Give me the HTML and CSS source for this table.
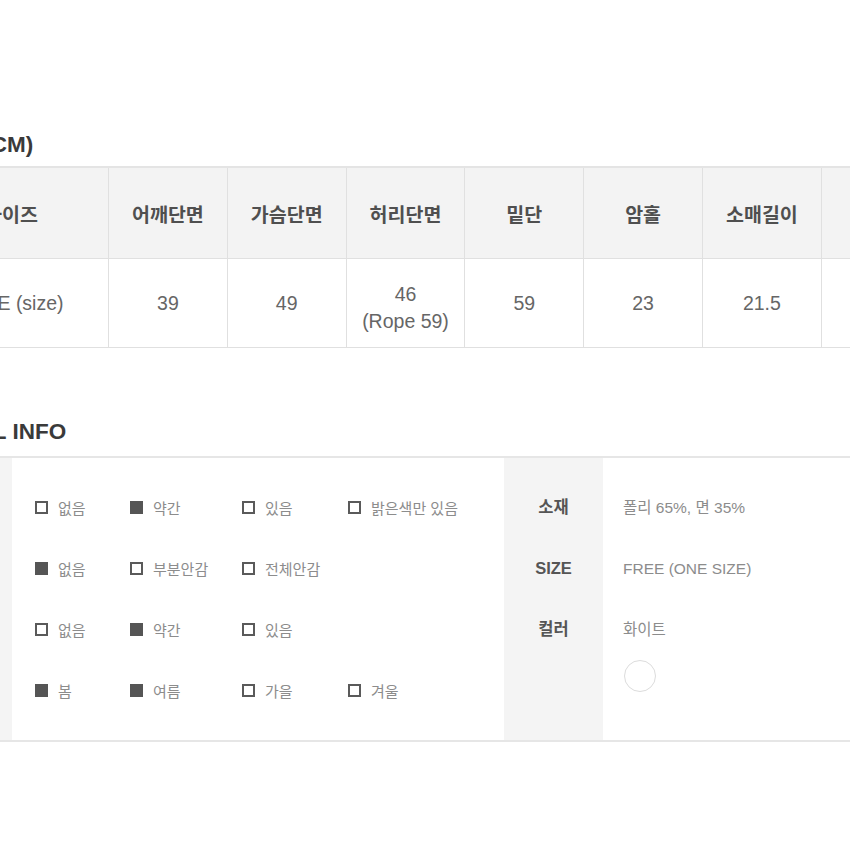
FILE: index.html
```html
<!DOCTYPE html>
<html lang="ko">
<head>
<meta charset="utf-8">
<title>SIZE / DETAIL INFO</title>
<link rel="stylesheet" href="styles.css">
</head>
<body>
<div class="page">
  <h2 class="sec-title">SIZE (CM)</h2>
  <table class="size-table">
    <colgroup>
      <col class="c-first">
      <col class="c"><col class="c"><col class="c"><col class="c">
      <col class="c"><col class="c"><col class="c"><col class="c">
    </colgroup>
    <thead>
      <tr>
        <th>사이즈</th>
        <th>어깨단면</th>
        <th>가슴단면</th>
        <th>허리단면</th>
        <th>밑단</th>
        <th>암홀</th>
        <th>소매길이</th>
        <th>총장</th>
        <th></th>
      </tr>
    </thead>
    <tbody>
      <tr>
        <td>FREE (size)</td>
        <td>39</td>
        <td>49</td>
        <td class="two-line">46<br>(Rope 59)</td>
        <td>59</td>
        <td>23</td>
        <td>21.5</td>
        <td>55</td>
        <td></td>
      </tr>
    </tbody>
  </table>

  <h2 class="sec-title sec-title-2">DETAIL INFO</h2>
  <div class="detail">
    <div class="label-col">
      <div class="label">비침</div>
      <div class="label">안감</div>
      <div class="label">신축성</div>
      <div class="label">계절</div>
    </div>
    <div class="options">
      <div class="opt"><span class="box"></span>없음</div>
      <div class="opt"><span class="box on"></span>약간</div>
      <div class="opt"><span class="box"></span>있음</div>
      <div class="opt"><span class="box"></span>밝은색만 있음</div>

      <div class="opt"><span class="box on"></span>없음</div>
      <div class="opt"><span class="box"></span>부분안감</div>
      <div class="opt"><span class="box"></span>전체안감</div>
      <div class="opt"></div>

      <div class="opt"><span class="box"></span>없음</div>
      <div class="opt"><span class="box on"></span>약간</div>
      <div class="opt"><span class="box"></span>있음</div>
      <div class="opt"></div>

      <div class="opt"><span class="box on"></span>봄</div>
      <div class="opt"><span class="box on"></span>여름</div>
      <div class="opt"><span class="box"></span>가을</div>
      <div class="opt"><span class="box"></span>겨울</div>
    </div>
    <div class="label-col">
      <div class="label">소재</div>
      <div class="label">SIZE</div>
      <div class="label">컬러</div>
    </div>
    <div class="values">
      <div class="value">폴리 65%, 면 35%</div>
      <div class="value">FREE (ONE SIZE)</div>
      <div class="value">화이트</div>
      <div class="swatch"></div>
    </div>
  </div>
</div>
</body>
</html>
```

FILE: styles.css
```css
html, body {
  margin: 0;
  padding: 0;
  overflow: hidden;
  background: #ffffff;
}

body {
  font-family: "Liberation Sans", "Noto Sans CJK KR", sans-serif;
  color: #555;
}

.page {
  margin-left: -87px;
  width: 1240px;
  padding-top: 130px;
}

.sec-title {
  margin: 0 0 6px 14px;
  font-size: 22.5px;
  line-height: 30px;
  font-weight: 700;
  color: #3a3a3a;
}

.sec-title-2 {
  margin-top: 69px;
  margin-bottom: 9px;
}

/* size table */
.size-table {
  border-collapse: collapse;
  table-layout: fixed;
  width: 1145.4px;
  border-top: 2px solid #e4e4e4;
}

.size-table .c-first { width: 195px; }
.size-table .c { width: 118.8px; }

.size-table th,
.size-table td {
  border: 1px solid #e0e0e0;
  text-align: center;
  vertical-align: middle;
  padding: 0;
  font-size: 19.5px;
}

.size-table th {
  height: 90px;
  background: #f3f3f3;
  color: #4f4f4f;
  font-weight: 700;
}

.size-table td {
  height: 88px;
  background: #ffffff;
  color: #666;
  font-weight: 400;
  line-height: 27px;
}

.size-table td.two-line {
  vertical-align: top;
  height: 66px;
  padding-top: 22px;
}

/* detail table */
.detail {
  display: flex;
  border-top: 2px solid #e6e6e6;
  border-bottom: 2px solid #e6e6e6;
}

.label-col {
  width: 99px;
  flex: none;
  background: #f4f4f4;
  padding: 19px 0;
}

.label {
  height: 61px;
  line-height: 61px;
  text-align: center;
  font-size: 16.5px;
  font-weight: 700;
  color: #555;
}

.options {
  width: 469px;
  flex: none;
  padding: 19px 0 19px 23px;
  display: grid;
  grid-template-columns: 95px 112px 106px auto;
  grid-auto-rows: 61px;
}

.opt {
  display: flex;
  align-items: center;
  gap: 10px;
  font-size: 15px;
  color: #8c8c8c;
  white-space: nowrap;
}

.box {
  width: 13px;
  height: 13px;
  box-sizing: border-box;
  border: 2px solid #5a5a5a;
  background: #fff;
  flex: none;
}

.box.on {
  background: #555;
  border-color: #555;
}

.values {
  flex: 1;
  padding: 19px 0 19px 20px;
}

.value {
  height: 61px;
  line-height: 61px;
  font-size: 15.5px;
  color: #8c8c8c;
  white-space: nowrap;
}

.swatch {
  width: 32px;
  height: 32px;
  box-sizing: border-box;
  border: 1px solid #dcdcdc;
  border-radius: 50%;
  background: #fff;
  margin-left: 1px;
}
```
